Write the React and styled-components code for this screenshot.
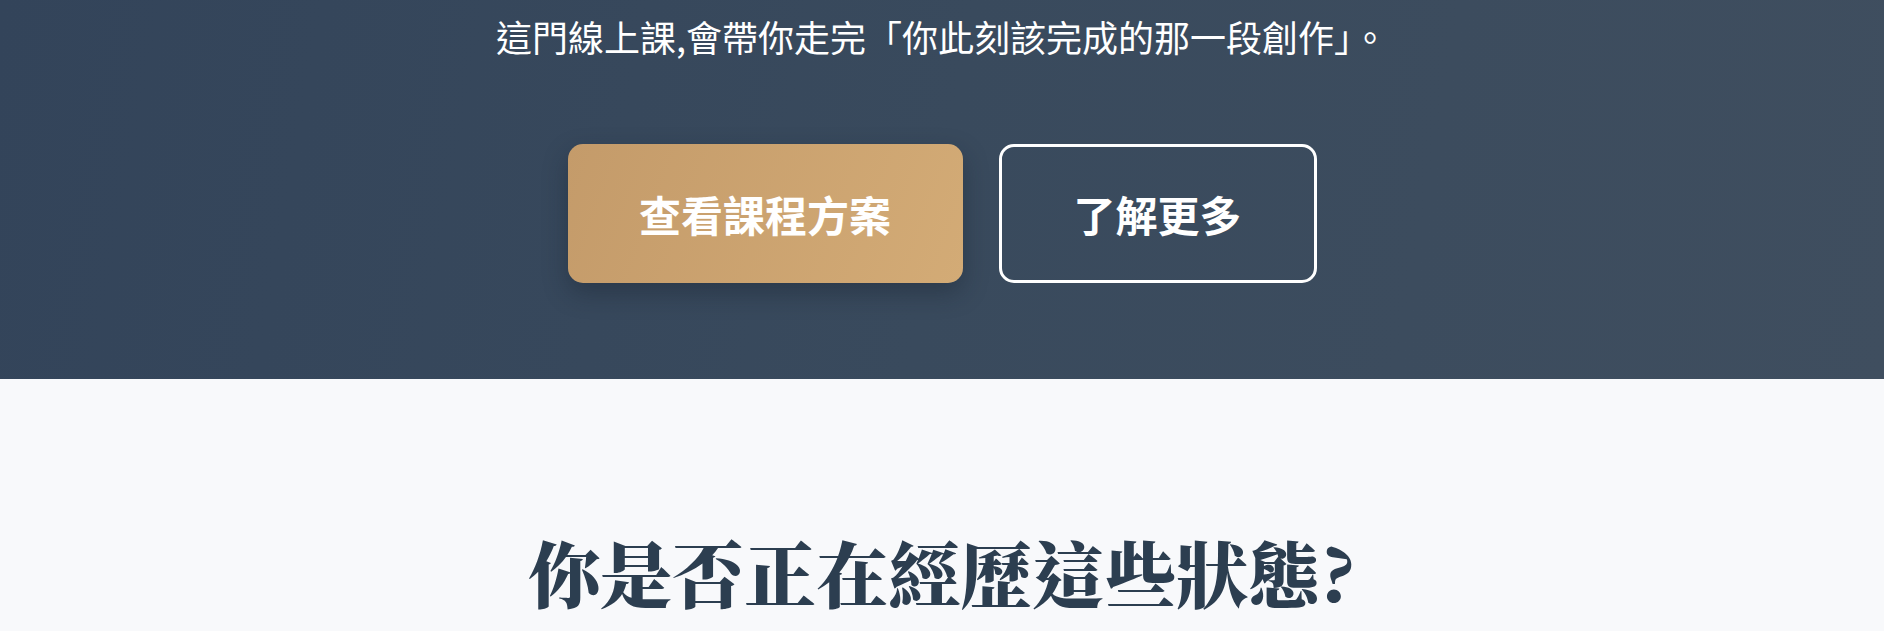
import React from "react";
import styled, { createGlobalStyle } from "styled-components";

const GlobalStyle = createGlobalStyle`
  * {
    box-sizing: border-box;
  }
  body {
    margin: 0;
    background: #f8f9fb;
    font-family: "Noto Sans CJK TC", "Noto Sans", sans-serif;
  }
`;

const Hero = styled.section`
  height: 379px;
  padding-top: 14px;
  background: linear-gradient(100deg, #33445a 0%, #394a5d 50%, #3f4e5f 100%);
  display: flex;
  flex-direction: column;
  align-items: center;
`;

const Lead = styled.p`
  margin: 0;
  color: #ffffff;
  font-size: 36px;
  line-height: 44px;
  font-weight: 400;
`;

const Actions = styled.div`
  margin-top: 86px;
  display: flex;
  gap: 36px;
  align-items: center;
`;

const Button = styled.a`
  display: flex;
  align-items: center;
  justify-content: center;
  height: 139px;
  border-radius: 15px;
  color: #ffffff;
  font-size: 42px;
  font-weight: 700;
  text-decoration: none;
  cursor: pointer;
`;

const PrimaryButton = styled(Button)`
  width: 395px;
  background: linear-gradient(110deg, #c49b6a 0%, #d3ab76 100%);
  box-shadow: 0 10px 24px rgba(20, 28, 40, 0.35);
`;

const GhostButton = styled(Button)`
  width: 318px;
  border: 3px solid #ffffff;
  background: transparent;
`;

const Problems = styled.section`
  padding-top: 147px;
  display: flex;
  justify-content: center;
`;

const Heading = styled.h2`
  margin: 0;
  color: #2c3e50;
  font-family: "Noto Serif CJK TC", "Noto Serif TC", "Noto Sans CJK TC", serif;
  font-size: 72px;
  line-height: 90px;
  font-weight: 900;
`;

export default function App() {
  return (
    <>
      <GlobalStyle />
      <Hero>
        <Lead>這門線上課,會帶你走完「你此刻該完成的那一段創作」。</Lead>
        <Actions>
          <PrimaryButton>查看課程方案</PrimaryButton>
          <GhostButton>了解更多</GhostButton>
        </Actions>
      </Hero>
      <Problems>
        <Heading>你是否正在經歷這些狀態?</Heading>
      </Problems>
    </>
  );
}
